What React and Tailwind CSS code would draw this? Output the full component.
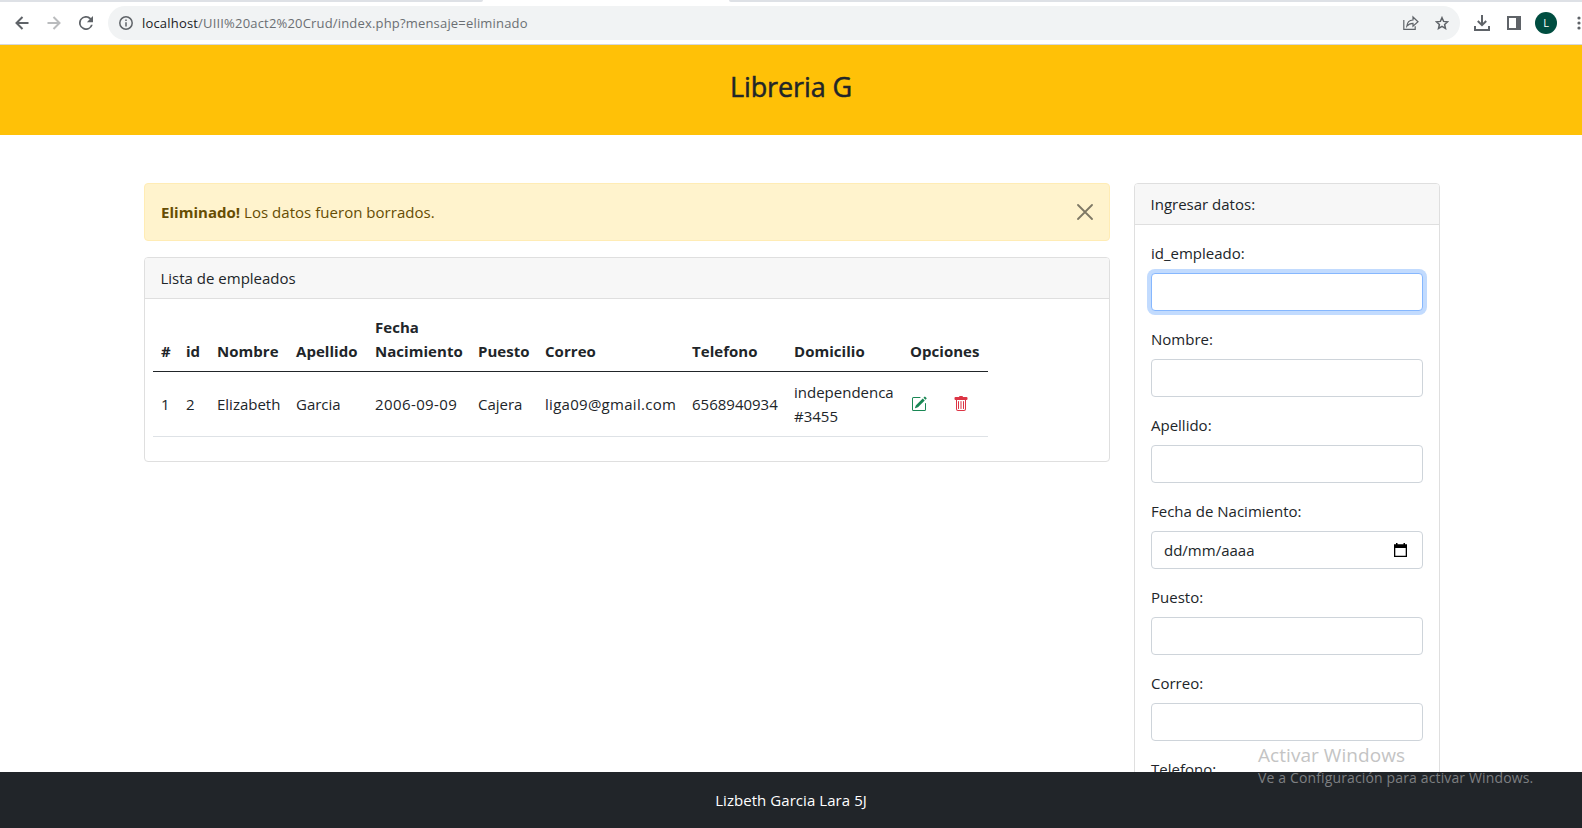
import { useState } from "react";

const columns = [
  { label: "#", width: "w-[25px]", value: "1" },
  { label: "id", width: "w-[31px]", value: "2" },
  { label: "Nombre", width: "w-[79px]", value: "Elizabeth" },
  { label: "Apellido", width: "w-[79px]", value: "Garcia" },
  { label: "Fecha Nacimiento", width: "w-[103px]", value: "2006-09-09", tracking: "tracking-[0.4px]" },
  { label: "Puesto", width: "w-[67px]", value: "Cajera" },
  { label: "Correo", width: "w-[147px]", value: "liga09@gmail.com", tracking: "tracking-[0.28px]" },
  { label: "Telefono", width: "w-[102px]", value: "6568940934" },
  { label: "Domicilio", width: "w-[116px]", value: "independenca #3455" },
];

const fields = [
  { label: "id_empleado:" },
  { label: "Nombre:" },
  { label: "Apellido:" },
  { label: "Fecha de Nacimiento:", date: true },
  { label: "Puesto:" },
  { label: "Correo:" },
  { label: "Telefono:" },
];

function BrowserBar() {
  return (
    <div className="h-[45px] shrink-0 border-b border-[#d5d8dc] bg-white">
      <div className="flex h-[2px] justify-between">
        <div className="w-[483px] rounded-br-[2px] bg-[#dee1e6]" />
        <div className="w-[853px] rounded-bl-[2px] bg-[#dee1e6]" />
      </div>
      <div className="flex h-[42px] items-center">
        <svg className="ml-[15px] size-[14px] shrink-0 text-[#5f6368]" viewBox="0 0 14 14" fill="none" stroke="currentColor" strokeWidth="2">
          <path d="M13.5 7H1.5M7.5 1 1.5 7l6 6" />
        </svg>
        <svg className="ml-[18px] size-[14px] shrink-0 text-[#babcbe]" viewBox="0 0 14 14" fill="none" stroke="currentColor" strokeWidth="2">
          <path d="M.5 7h12M6.5 1l6 6-6 6" />
        </svg>
        <svg className="ml-[18px] size-[14px] shrink-0 text-[#5f6368]" viewBox="4 4 16 16" fill="currentColor">
          <path d="M17.65 6.35A8 8 0 1 0 19.73 14h-2.08A6 6 0 1 1 12 6c1.66 0 3.14.69 4.22 1.78L13 11h7V4z" />
        </svg>
        <div className="ml-[15px] flex h-[34px] w-[1352px] shrink-0 items-center rounded-full bg-[#f1f3f4] pl-[11px]">
          <svg className="size-[14px] shrink-0" viewBox="0 0 14 14" fill="none">
            <circle cx="7" cy="7" r="6.2" stroke="#5f6368" strokeWidth="1.5" />
            <path d="M7 6.2v4.3M7 3.4v1.6" stroke="#5f6368" strokeWidth="1.5" />
          </svg>
          <span className="ml-[9px] whitespace-nowrap text-[13px] tracking-[0.18px] text-[#6b6f73]">
            <span className="text-[#202124]">localhost</span>/UIII%20act2%20Crud/index.php?mensaje=eliminado
          </span>
          <svg className="mr-[16px] ml-auto size-[16px]" viewBox="0 0 16 16" fill="none" stroke="#5f6368" strokeWidth="1.2">
            <path d="M.8 5v9.4h11.4v-3.2M3.8 11.2c.4-4 2.7-6 6.200-6.200V2l5 4.700-5 4.500V8.300c-2.600 0-4.600.8-6.200 2.900Z" />
          </svg>
          <svg className="mr-[11px] size-[14px]" viewBox="0 0 14 14" fill="none" stroke="#5f6368" strokeWidth="1.5">
            <path d="m7 1.7 1.6 3.7 4 .4-3 2.7.9 4L7 10.400l-3.500 2.100.9-4-3-2.700 4-.4z" />
          </svg>
        </div>
        <svg className="ml-[14px] size-[16px] shrink-0" viewBox="0 0 16 16" fill="none" stroke="#5f6368" strokeWidth="2">
          <path d="M8 0v10M3.8 6 8 10.2 12.2 6M1 11v4h14v-4" />
        </svg>
        <svg className="ml-[17px] size-[14px] shrink-0" viewBox="0 0 14 14" fill="#5f6368">
          <path fillRule="evenodd" d="M0 0h14v14H0zM2 2v10h7V2z" />
        </svg>
        <div className="ml-[14px] flex size-[22px] shrink-0 items-center justify-center rounded-full bg-[#004d40] text-[11px] text-white">L</div>
        <svg className="ml-[20px] h-[14px] w-[4px] shrink-0" viewBox="0 0 4 14" fill="#5f6368">
          <circle cx="2" cy="2" r="1.6" /><circle cx="2" cy="7" r="1.6" /><circle cx="2" cy="12" r="1.6" />
        </svg>
      </div>
    </div>
  );
}

function EditIcon() {
  return (
    <svg className="size-4" viewBox="0 0 16 16" fill="#198754">
      <path d="M15.502 1.94a.5.5 0 0 1 0 .706L14.459 3.69l-2-2L13.502.646a.5.5 0 0 1 .707 0l1.293 1.293zm-1.75 2.456-2-2L4.939 9.21a.5.5 0 0 0-.121.196l-.805 2.414a.25.25 0 0 0 .316.316l2.414-.805a.5.5 0 0 0 .196-.12l6.813-6.814z" />
      <path fillRule="evenodd" d="M1 13.5A1.5 1.5 0 0 0 2.5 15h11a1.5 1.5 0 0 0 1.5-1.5v-6a.5.5 0 0 0-1 0v6a.5.5 0 0 1-.5.5h-11a.5.5 0 0 1-.5-.5v-11a.5.5 0 0 1 .5-.5H9a.5.5 0 0 0 0-1H2.5A1.5 1.5 0 0 0 1 2.5v11z" />
    </svg>
  );
}

function TrashIcon() {
  return (
    <svg className="size-4" viewBox="0 0 16 16" fill="#dc3545">
      <path fillRule="evenodd" d="M2.5 1a1 1 0 0 0-1 1v1a1 1 0 0 0 1 1H3v9a2 2 0 0 0 2 2h6a2 2 0 0 0 2-2V4h.5a1 1 0 0 0 1-1V2a1 1 0 0 0-1-1H10a1 1 0 0 0-1-1H7a1 1 0 0 0-1 1H2.5zM4 4h8v9a1 1 0 0 1-1 1H5a1 1 0 0 1-1-1V4z" />
      <path d="M5.500 5a.5.5 0 0 0-.5.5v7a.5.5 0 0 0 1 0v-7a.5.5 0 0 0-.5-.5zM8 5a.5.5 0 0 0-.5.5v7a.5.5 0 0 0 1 0v-7A.5.5 0 0 0 8 5zm2.500 0a.5.5 0 0 0-.5.5v7a.5.5 0 0 0 1 0v-7a.5.5 0 0 0-.5-.5z" />
    </svg>
  );
}

function EmployeeTable() {
  return (
    <div className="rounded border border-[#dfdfdf] bg-white">
      <div className="h-[41px] rounded-t-[3px] border-b border-[#dfdfdf] bg-[#f7f7f7] py-2 pl-[15.5px]">Lista de empleados</div>
      <div className="p-2">
        <table className="mb-4 w-[835px] table-fixed border-separate border-spacing-0 text-left">
          <thead>
            <tr className="h-[65px]">
              {columns.map((c) => (
                <th key={c.label} className={`${c.width} border-b border-[#212529] p-2 align-bottom font-bold tracking-[0.04px]`}>{c.label}</th>
              ))}
              <th className="w-[86px] border-b border-[#212529] p-2 align-bottom font-bold tracking-[0.04px]">Opciones</th>
            </tr>
          </thead>
          <tbody>
            <tr className="h-[65px]">
              {columns.map((c) => (
                <td key={c.label} className={`border-b border-[#dee2e6] p-2 align-middle ${c.tracking ?? ""}`}>{c.value}</td>
              ))}
              <td className="border-b border-[#dee2e6] p-2 align-middle">
                <div className="flex gap-[26px] pl-px"><EditIcon /><TrashIcon /></div>
              </td>
            </tr>
          </tbody>
        </table>
      </div>
    </div>
  );
}

function Field({ label, focused, date, onFocus }) {
  return (
    <div className="mb-4" onClick={onFocus}>
      <label className="mb-2 block">{label}</label>
      <div className={`flex h-[38px] items-center justify-between rounded border bg-white px-3 ${focused ? "border-[#86b7fe] ring-4 ring-[#c2dbfe]" : "border-[#ced4da]"}`}>
        {date && (
          <>
            <span>dd/mm/aaaa</span>
            <svg className="mr-[3px] h-[15px] w-[13px]" viewBox="0 0 13 15" fill="#000">
              <path fillRule="evenodd" d="M2 0h1.500v1.300h6V0H11v1.300h2V14H0V1.300h2zM1.300 5v7.700h10.400V5z" />
            </svg>
          </>
        )}
      </div>
    </div>
  );
}

export default function App() {
  const [active, setActive] = useState(fields[0].label);
  const [alertOpen, setAlertOpen] = useState(true);
  return (
    <div className="relative flex h-[828px] w-[1582px] flex-col overflow-hidden bg-white font-['Open_Sans',sans-serif] text-[15px] leading-6 text-[#212529]">
      <BrowserBar />
      <header className="flex h-[90px] shrink-0 justify-center bg-[#ffc107] pt-[25px] text-[27px] leading-[34px] tracking-[-0.1px] [-webkit-text-stroke:0.5px_#212529]">
        <h1>Libreria G</h1>
      </header>
      <main className="flex min-h-0 flex-1 items-start gap-6 overflow-hidden pt-12 pl-[144px]">
        <section className="w-[966px]">
          {alertOpen && (
            <div className="mb-4 flex h-[58px] items-center justify-between rounded border border-[#ffecb5] bg-[#fff3cd] px-4 text-[#664d03]">
              <p className="tracking-[0.03px]"><strong className="font-bold">Eliminado!</strong> Los datos fueron borrados.</p>
              <button type="button" onClick={() => setAlertOpen(false)}>
                <svg className="size-4 opacity-50" viewBox="0 0 16 16" stroke="#000" strokeWidth="1.8" strokeLinecap="round">
                  <path d="m1 1 14 14M15 1 1 15" />
                </svg>
              </button>
            </div>
          )}
          <EmployeeTable />
        </section>
        <aside className="w-[306px] rounded border border-[#dfdfdf] bg-white">
          <div className="h-[41px] rounded-t-[3px] border-b border-[#dfdfdf] bg-[#f7f7f7] py-2 pl-[15.5px]">Ingresar datos:</div>
          <div className="p-4">
            {fields.map((f) => (
              <Field key={f.label} {...f} focused={f.label === active} onFocus={() => setActive(f.label)} />
            ))}
          </div>
        </aside>
      </main>
      <footer className="flex h-14 shrink-0 items-center justify-center bg-[#212529] text-white tracking-[0.06px]">Lizbeth Garcia Lara 5J</footer>
      <div className="absolute top-[742px] left-[1258px] whitespace-nowrap">
        <p className="text-[19px] leading-[26px] tracking-[0.05px] text-[#c4c4c4]">Activar Windows</p>
        <p className="text-[14px] leading-5 tracking-[0.14px] text-[#7d7f81]">Ve a Configuración para activar Windows.</p>
      </div>
    </div>
  );
}
